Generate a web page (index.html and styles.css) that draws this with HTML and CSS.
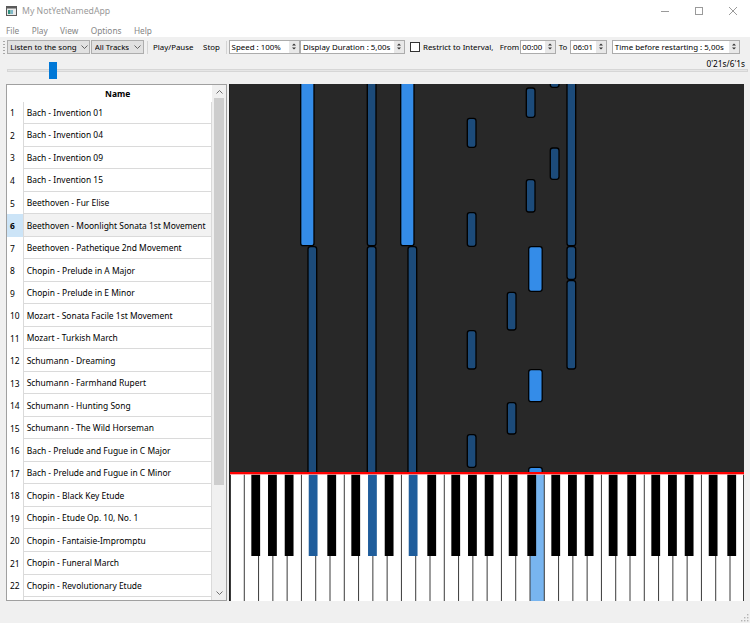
FILE: index.html
```html
<!DOCTYPE html>
<html>
<head>
<meta charset="utf-8">
<title>My NotYetNamedApp</title>
<link rel="stylesheet" href="styles.css">
</head>
<body>
<div class="window">
  <header class="titlebar">
    <svg class="app-icon" width="11" height="10" viewBox="0 0 11 10">
      <rect x="0.5" y="0.5" width="10" height="9" fill="#e9e9e9" stroke="#5a5a5a"/>
      <rect x="0.5" y="0.5" width="10" height="2" fill="#5a5a5a"/>
      <rect x="2" y="4" width="2.5" height="4" fill="#2f8f7f"/>
      <rect x="5" y="4" width="2" height="4" fill="#7fb7c9"/>
    </svg>
    <span class="title">My NotYetNamedApp</span>
    <div class="controls">
      <span class="ctl"><svg width="10" height="10" viewBox="0 0 10 10"><path d="M1 5.5h8" stroke="#9a9a9a" stroke-width="1"/></svg></span>
      <span class="ctl"><svg width="10" height="10" viewBox="0 0 10 10"><rect x="1.5" y="1.5" width="7" height="7" fill="none" stroke="#9a9a9a"/></svg></span>
      <span class="ctl"><svg width="10" height="10" viewBox="0 0 10 10"><path d="M1 1l8 8M9 1l-8 8" stroke="#9a9a9a" stroke-width="1"/></svg></span>
    </div>
  </header>

  <nav class="menubar">
    <span class="menu-item">File</span>
    <span class="menu-item">Play</span>
    <span class="menu-item">View</span>
    <span class="menu-item">Options</span>
    <span class="menu-item">Help</span>
  </nav>

  <div class="toolbar">
    <span class="grip"></span>
    <div class="combo combo-mode"><span class="combo-text">Listen to the song</span><svg class="chev" width="7" height="4" viewBox="0 0 7 4"><path d="M0.5 0.5l3 3 3-3" fill="none" stroke="#555" stroke-width="0.9"/></svg></div>
    <div class="combo combo-tracks"><span class="combo-text">All Tracks</span><svg class="chev" width="7" height="4" viewBox="0 0 7 4"><path d="M0.5 0.5l3 3 3-3" fill="none" stroke="#555" stroke-width="0.9"/></svg></div>
    <span class="tsep sep-a"></span>
    <span class="tbtn btn-play">Play/Pause</span>
    <span class="tbtn btn-stop">Stop</span>
    <span class="tsep sep-b"></span>
    <div class="spin spin-speed"><span class="val">Speed : 100%</span><span class="arrows"><svg width="10" height="11" viewBox="0 0 10 11"><path d="M3 4.6h4L5 2.4z M3 6.4h4L5 8.6z" fill="#333"/></svg></span></div>
    <div class="spin spin-dur"><span class="val">Display Duration : 5,00s</span><span class="arrows"><svg width="10" height="11" viewBox="0 0 10 11"><path d="M3 4.6h4L5 2.4z M3 6.4h4L5 8.6z" fill="#333"/></svg></span></div>
    <span class="checkbox"></span>
    <span class="tlabel lbl-restrict">Restrict to Interval,</span>
    <span class="tlabel lbl-from">From</span>
    <div class="spin spin-from"><span class="val">00:00</span><span class="arrows"><svg width="10" height="11" viewBox="0 0 10 11"><path d="M3 4.6h4L5 2.4z M3 6.4h4L5 8.6z" fill="#333"/></svg></span></div>
    <span class="tlabel lbl-to">To</span>
    <div class="spin spin-to"><span class="val">06:01</span><span class="arrows"><svg width="10" height="11" viewBox="0 0 10 11"><path d="M3 4.6h4L5 2.4z M3 6.4h4L5 8.6z" fill="#333"/></svg></span></div>
    <div class="spin spin-restart"><span class="val">Time before restarting : 5,00s</span><span class="arrows"><svg width="10" height="11" viewBox="0 0 10 11"><path d="M3 4.6h4L5 2.4z M3 6.4h4L5 8.6z" fill="#333"/></svg></span></div>
  </div>

  <div class="seek">
    <span class="time">0'21s/6'1s</span>
    <div class="slider">
      <div class="groove"></div>
      <div class="handle"></div>
    </div>
  </div>

  <div class="main">
    <div class="table">
      <div class="grid">
        <div class="hdr"><span class="corner"></span><span class="hname">Name</span></div>
        <div class="row"><span class="num">1</span><span class="name">Bach - Invention 01</span></div>
        <div class="row"><span class="num">2</span><span class="name">Bach - Invention 04</span></div>
        <div class="row"><span class="num">3</span><span class="name">Bach - Invention 09</span></div>
        <div class="row"><span class="num">4</span><span class="name">Bach - Invention 15</span></div>
        <div class="row"><span class="num">5</span><span class="name">Beethoven - Fur Elise</span></div>
        <div class="row current"><span class="num">6</span><span class="name">Beethoven - Moonlight Sonata 1st Movement</span></div>
        <div class="row"><span class="num">7</span><span class="name">Beethoven - Pathetique 2nd Movement</span></div>
        <div class="row"><span class="num">8</span><span class="name">Chopin - Prelude in A Major</span></div>
        <div class="row"><span class="num">9</span><span class="name">Chopin - Prelude in E Minor</span></div>
        <div class="row"><span class="num">10</span><span class="name">Mozart - Sonata Facile 1st Movement</span></div>
        <div class="row"><span class="num">11</span><span class="name">Mozart - Turkish March</span></div>
        <div class="row"><span class="num">12</span><span class="name">Schumann - Dreaming</span></div>
        <div class="row"><span class="num">13</span><span class="name">Schumann - Farmhand Rupert</span></div>
        <div class="row"><span class="num">14</span><span class="name">Schumann - Hunting Song</span></div>
        <div class="row"><span class="num">15</span><span class="name">Schumann - The Wild Horseman</span></div>
        <div class="row"><span class="num">16</span><span class="name">Bach - Prelude and Fugue in C Major</span></div>
        <div class="row"><span class="num">17</span><span class="name">Bach - Prelude and Fugue in C Minor</span></div>
        <div class="row"><span class="num">18</span><span class="name">Chopin - Black Key Etude</span></div>
        <div class="row"><span class="num">19</span><span class="name">Chopin - Etude Op. 10, No. 1</span></div>
        <div class="row"><span class="num">20</span><span class="name">Chopin - Fantaisie-Impromptu</span></div>
        <div class="row"><span class="num">21</span><span class="name">Chopin - Funeral March</span></div>
        <div class="row"><span class="num">22</span><span class="name">Chopin - Revolutionary Etude</span></div>
        <div class="row"><span class="num"></span><span class="name"></span></div>
      </div>
      <div class="vscroll">
        <span class="sb-btn sb-up"><svg width="7" height="4" viewBox="0 0 7 4"><path d="M0.5 3.5l3-3 3 3" fill="none" stroke="#606060" stroke-width="0.9"/></svg></span>
        <span class="thumb"></span>
        <span class="sb-track"></span>
        <span class="sb-btn sb-down"><svg width="7" height="4" viewBox="0 0 7 4"><path d="M0.5 0.5l3 3 3-3" fill="none" stroke="#606060" stroke-width="0.9"/></svg></span>
      </div>
    </div>

    <div class="roll">
      <svg class="roll-svg" width="514" height="517" viewBox="0 0 514 517">
        <rect x="0" y="0" width="514" height="388" fill="#282828"/>
        <g class="notes" stroke="#000" stroke-width="1.3">
          <rect class="nw" x="70.7" y="-5" width="13.3" height="166.7" rx="2.5"/>
          <rect class="nw" x="170.7" y="-5" width="13.3" height="166.7" rx="2.5"/>
          <rect class="nw" x="298.7" y="162.7" width="13.5" height="44.6" rx="2.5"/>
          <rect class="nw" x="298.7" y="285.7" width="13.5" height="32" rx="2.5"/>
          <rect class="nw" x="298.7" y="383.3" width="13.5" height="20" rx="2.5"/>

          <rect class="nb" x="78" y="162.7" width="8.7" height="240" rx="2.5"/>
          <rect class="nb" x="137.3" y="-5" width="8.7" height="166.7" rx="2.5"/>
          <rect class="nb" x="137.3" y="162.7" width="8.7" height="240" rx="2.5"/>
          <rect class="nb" x="178" y="162.7" width="8.7" height="240" rx="2.5"/>

          <rect class="nb" x="237.3" y="34.3" width="8.7" height="29" rx="2.5"/>
          <rect class="nb" x="237.3" y="128.7" width="8.7" height="33.6" rx="2.5"/>
          <rect class="nb" x="237.3" y="246.7" width="8.7" height="38.3" rx="2.5"/>
          <rect class="nb" x="237.3" y="350.7" width="8.7" height="32.6" rx="2.5"/>

          <rect class="nb" x="277.3" y="208.3" width="8.7" height="37.7" rx="2.5"/>
          <rect class="nb" x="277.3" y="318.7" width="8.7" height="31.3" rx="2.5"/>

          <rect class="nb" x="296.3" y="4" width="8.7" height="29.3" rx="2.5"/>
          <rect class="nb" x="296.3" y="95.7" width="8.7" height="32.3" rx="2.5"/>

          <rect class="nb" x="320.3" y="-10" width="8.7" height="13.3" rx="2.5"/>
          <rect class="nb" x="320.3" y="64" width="8.7" height="31.3" rx="2.5"/>

          <rect class="nb" x="337" y="-5" width="8.7" height="166.7" rx="2.5"/>
          <rect class="nb" x="337" y="162.7" width="8.7" height="32.6" rx="2.5"/>
          <rect class="nb" x="337" y="196.7" width="8.7" height="88.3" rx="2.5"/>
        </g>

        <rect x="0" y="390" width="514" height="127" fill="#ffffff"/>
        <rect x="300" y="390" width="14.29" height="127" fill="#78b5f0"/>
        <path d="M0.5 390V517M14.29 390V517M28.57 390V517M42.86 390V517M57.14 390V517M71.43 390V517M85.71 390V517M100 390V517M114.29 390V517M128.57 390V517M142.86 390V517M157.14 390V517M171.43 390V517M185.71 390V517M200 390V517M214.29 390V517M228.57 390V517M242.86 390V517M257.14 390V517M271.43 390V517M285.71 390V517M300 390V517M314.29 390V517M328.57 390V517M342.86 390V517M357.14 390V517M371.43 390V517M385.71 390V517M400 390V517M414.29 390V517M428.57 390V517M442.86 390V517M457.14 390V517M471.43 390V517M485.71 390V517M500 390V517M513.5 390V517" stroke="#3a3a3a" stroke-width="1"/>
        <path d="M21.33 390h8.8v82h-8.8zM38.03 390h8.8v82h-8.8zM54.73 390h8.8v82h-8.8zM97.33 390h8.8v82h-8.8zM121.33 390h8.8v82h-8.8zM154.73 390h8.8v82h-8.8zM197.33 390h8.8v82h-8.8zM221.33 390h8.8v82h-8.8zM238.03 390h8.8v82h-8.8zM254.73 390h8.8v82h-8.8zM278.73 390h8.8v82h-8.8zM297.33 390h8.8v82h-8.8zM321.33 390h8.8v82h-8.8zM338.03 390h8.8v82h-8.8zM354.73 390h8.8v82h-8.8zM378.73 390h8.8v82h-8.8zM397.33 390h8.8v82h-8.8zM421.33 390h8.8v82h-8.8zM438.03 390h8.8v82h-8.8zM454.73 390h8.8v82h-8.8zM478.73 390h8.8v82h-8.8zM497.33 390h8.8v82h-8.8z" fill="#000"/>
        <path d="M78.73 390h8.8v82h-8.8zM138.03 390h8.8v82h-8.8zM178.73 390h8.8v82h-8.8z" fill="#1f5d9b"/>
        <rect x="0" y="388" width="514" height="2" fill="#ff0000"/>
        <rect x="0" y="390" width="514" height="0.8" fill="#ff9a9a"/>
      </svg>
    </div>
  </div>

  <div class="statusbar">
    <svg class="sizegrip" width="8" height="8" viewBox="0 0 8 8">
      <g fill="#b4b4b4">
        <rect x="6" y="0" width="1.4" height="1.4"/>
        <rect x="3" y="3" width="1.4" height="1.4"/>
        <rect x="6" y="3" width="1.4" height="1.4"/>
        <rect x="0" y="6" width="1.4" height="1.4"/>
        <rect x="3" y="6" width="1.4" height="1.4"/>
        <rect x="6" y="6" width="1.4" height="1.4"/>
      </g>
    </svg>
  </div>
</div>
</body>
</html>
```

FILE: styles.css
```css
* { box-sizing: border-box; }

html, body {
  margin: 0;
  padding: 0;
}

body {
  width: 750px;
  height: 623px;
  overflow: hidden;
  background: #f0f0f0;
  font-family: "Noto Sans", "Open Sans", sans-serif;
  font-size: 8.3px;
  color: #000;
}

.window {
  width: 750px;
  height: 623px;
  display: flex;
  flex-direction: column;
}

/* ---------- title bar ---------- */
.titlebar {
  height: 22px;
  flex: none;
  background: #fff;
  display: flex;
  align-items: center;
}

.app-icon {
  margin-left: 6px;
  flex: none;
}

.title {
  margin-left: 5px;
  font-size: 8.7px;
  color: #9a9a9a;
  white-space: nowrap;
}

.controls {
  margin-left: auto;
  display: flex;
  height: 22px;
}

.ctl {
  width: 34px;
  height: 22px;
  display: flex;
  align-items: center;
  justify-content: center;
}

/* ---------- menu bar ---------- */
.menubar {
  height: 15px;
  flex: none;
  background: #fff;
  display: flex;
  align-items: center;
  padding-left: 6px;
  gap: 12.4px;
  color: #858585;
}

.menu-item {
  white-space: nowrap;
  padding-top: 1px;
}

/* ---------- toolbar ---------- */
.toolbar {
  height: 20px;
  flex: none;
  display: flex;
  align-items: center;
  white-space: nowrap;
  font-size: 7.9px;
}

.grip {
  margin-left: 3px;
  width: 2px;
  height: 13px;
  background: repeating-linear-gradient(to bottom, #a8a8a8 0 1px, transparent 1px 3px);
  flex: none;
}

.combo {
  height: 13.4px;
  border: 1px solid #adadad;
  background: #e1e1e1;
  display: flex;
  align-items: center;
  padding-left: 2px;
  flex: none;
}

.combo-text {
  overflow: hidden;
  min-width: 0;
}

.chev {
  margin-left: auto;
  margin-right: 1.5px;
  flex: none;
}

.combo-mode {
  margin-left: 2.3px;
  width: 83px;
}

.combo-tracks {
  margin-left: 0.4px;
  width: 53.6px;
  padding-left: 3px;
}

.combo-tracks .chev {
  margin-right: 2.5px;
}

.tsep {
  width: 1px;
  height: 13px;
  background: #d4d4d4;
  flex: none;
}

.sep-a { margin-left: 3.2px; }
.sep-b { margin-left: 1.8px; }

.tbtn {
  height: 15px;
  display: flex;
  align-items: center;
  justify-content: center;
  flex: none;
}

.btn-play {
  margin-left: 1px;
  width: 47.5px;
}

.btn-stop {
  margin-left: 2px;
  width: 25px;
}

.spin {
  height: 13.4px;
  border: 1px solid #acacac;
  background: #fff;
  display: flex;
  align-items: center;
  flex: none;
}

.spin .val {
  flex: 1;
  min-width: 0;
  padding-left: 1.5px;
  overflow: hidden;
}

.arrows {
  width: 10px;
  height: 100%;
  background: #e8e8e8;
  display: flex;
  align-items: center;
  justify-content: center;
  flex: none;
}

.spin-speed { margin-left: 2.3px; width: 70.7px; }
.spin-dur { margin-left: 0.7px; width: 104.6px; }
.spin-from { margin-left: 3px; width: 36.7px; }
.spin-to { margin-left: 2.7px; width: 36.6px; }
.spin-restart { margin-left: 5.4px; width: 127.3px; }

.checkbox {
  margin-left: 5.4px;
  width: 10px;
  height: 10px;
  border: 1px solid #333;
  background: #fff;
  flex: none;
}

.tlabel {
  flex: none;
}

.lbl-restrict { margin-left: 2.6px; width: 71.7px; }
.lbl-from { margin-left: 5px; width: 17px; }
.lbl-to { margin-left: 2.3px; width: 9px; }

/* ---------- seek row ---------- */
.seek {
  height: 27px;
  flex: none;
  display: grid;
  padding: 0 2px 0 7px;
}

.time {
  grid-area: 1 / 1;
  justify-self: end;
  align-self: start;
  margin-top: 0.5px;
  margin-right: 3px;
  line-height: 11px;
  white-space: nowrap;
}

.slider {
  grid-area: 1 / 1;
  align-self: start;
  margin-top: 5px;
  height: 17px;
  position: relative;
}

.groove {
  margin-top: 6.5px;
  height: 3px;
  background: #e6e6e6;
  border: 1px solid #d6d6d6;
}

.handle {
  position: absolute;
  left: 42.3px;
  top: 0;
  width: 8px;
  height: 17px;
  background: #0078d7;
}

/* ---------- main ---------- */
.main {
  height: 517px;
  flex: none;
  display: flex;
  padding-left: 6px;
  gap: 2px;
}

.table {
  width: 221px;
  height: 517px;
  border: 1px solid #a0a0a0;
  background: #fff;
  display: flex;
  flex: none;
  font-size: 8.45px;
}

.grid {
  width: 205px;
  display: flex;
  flex-direction: column;
  overflow: hidden;
}

.hdr {
  height: 16.7px;
  flex: none;
  display: flex;
}

.corner {
  width: 16.3px;
  flex: none;
}

.hname {
  flex: 1;
  text-align: center;
  font-weight: bold;
  line-height: 17px;
}

.row {
  height: 22.53px;
  flex: none;
  display: flex;
}

.num {
  width: 16.3px;
  flex: none;
  padding-left: 3px;
  display: flex;
  align-items: center;
}

.name {
  flex: 1;
  border-left: 1px solid #dadada;
  border-right: 1px solid #dadada;
  border-bottom: 1px solid #dadada;
  padding-left: 2.4px;
  display: flex;
  align-items: center;
  white-space: nowrap;
  overflow: hidden;
}

.row.current .num {
  font-weight: bold;
  background: #cce4f7;
}

.row.current .name {
  background: #f2f2f2;
}

.vscroll {
  width: 14px;
  flex: none;
  background: #f0f0f0;
  display: flex;
  flex-direction: column;
  align-items: center;
}

.sb-btn {
  width: 14px;
  display: flex;
  align-items: center;
  justify-content: center;
  flex: none;
}

.sb-up { height: 13px; }
.sb-down { height: 15px; }

.thumb {
  width: 10px;
  height: 387px;
  background: #cdcdcd;
  flex: none;
}

.sb-track {
  flex: 1;
}

.roll {
  width: 515px;
  height: 517px;
  border-left: 1px solid #1e1e1e;
  flex: none;
  overflow: hidden;
}

.roll-svg {
  display: block;
}

.nw { fill: #348ce8; }
.nb { fill: #1c4b7a; }

/* ---------- status bar ---------- */
.statusbar {
  height: 22px;
  flex: none;
  display: flex;
  justify-content: flex-end;
  align-items: flex-end;
  padding: 0 1px 1px 0;
}
```
